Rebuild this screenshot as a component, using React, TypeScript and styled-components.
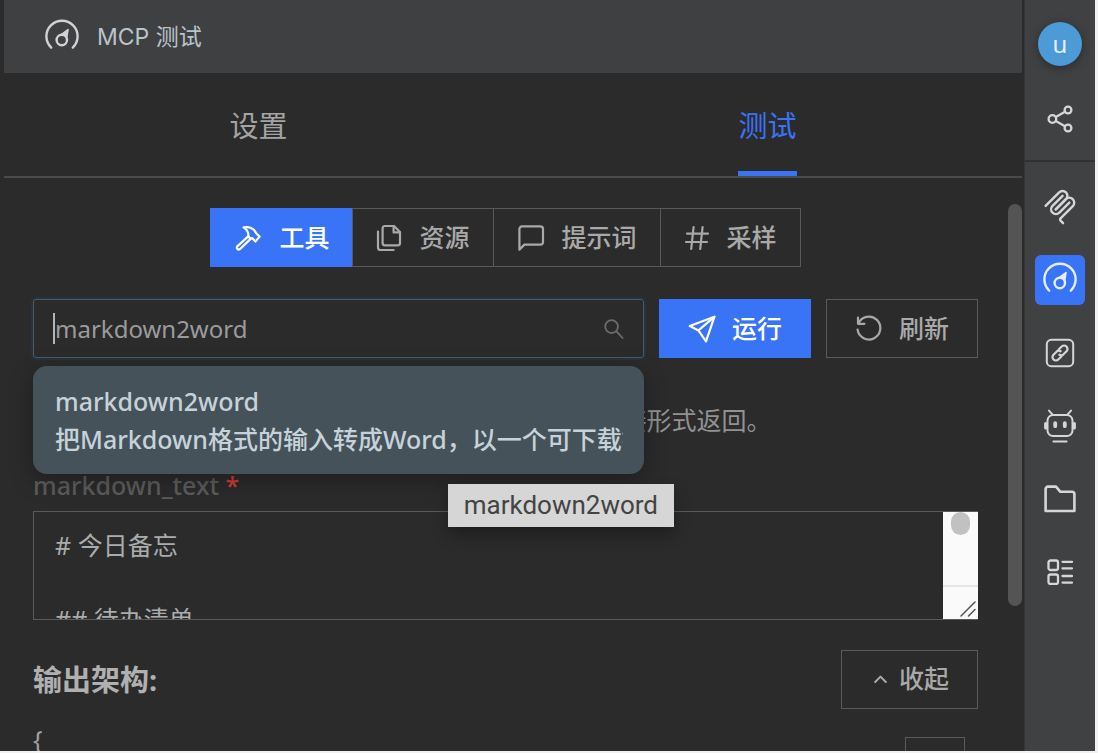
import React from "react";
import styled, { createGlobalStyle, css } from "styled-components";

const GlobalStyle = createGlobalStyle`
  *, *::before, *::after { box-sizing: border-box; }
  body {
    margin: 0;
    background: #f1f1f1;
    color: #a9abad;
    font-family: "Noto Sans", "Noto Sans CJK SC", sans-serif;
    font-size: 25px;
    line-height: 37px;
  }
  button, input, textarea { font: inherit; color: inherit; margin: 0; border-radius: 0; }
  button { cursor: pointer; }
`;

const blue = "#3874f5";
const line = "#5a5a5a";

const Shell = styled.div`
  display: flex;
  height: 100vh;
  padding: 0 3px 2px 0;
  overflow: hidden;
`;

const Panel = styled.main`
  flex: 1;
  min-width: 0;
  display: flex;
  flex-direction: column;
  padding: 0 2px 0 4px;
  background: #2b2b2b;
`;

const Header = styled.header`
  flex: none;
  display: flex;
  align-items: center;
  gap: 16px;
  height: 73px;
  padding: 0 39px;
  background: #3f4042;
  color: #d0d3d6;
`;

const Title = styled.h1`
  margin: 0;
  padding-top: 2px;
  font-family: Inter, "Noto Sans CJK SC", sans-serif;
  font-size: 23px;
  font-weight: 400;
  color: #b9c3cc;
`;

const Tabs = styled.nav`
  flex: none;
  display: flex;
  height: 105px;
  border-bottom: 2px solid #4a4a4a;
`;

const TabCell = styled.div`
  flex: 1;
  display: flex;
  justify-content: center;
`;

const Tab = styled.button<{ $active?: boolean }>`
  padding: 6px 0 0;
  border: 0;
  border-bottom: 5px solid ${(p) => (p.$active ? blue : "transparent")};
  background: none;
  color: ${(p) => (p.$active ? blue : "#a4a4a4")};
  font-size: 29px;
`;

const Body = styled.div`
  flex: 1;
  min-height: 0;
  display: flex;
  overflow: hidden;
`;

const Content = styled.div`
  flex: 1;
  min-width: 0;
  padding: 30px 30px 0 29px;
`;

const ScrollTrack = styled.div`
  flex: none;
  width: 14px;
  padding-top: 26px;
`;

const ScrollThumb = styled.div`
  height: 402px;
  border-radius: 7px;
  background: #545454;
`;

const Segments = styled.div`
  display: flex;
  justify-content: center;
  margin-bottom: 32px;
`;

const boxed = css`
  display: flex;
  align-items: center;
  justify-content: center;
  height: 59px;
  border: 1px solid ${line};
  background: transparent;
  color: #a9a9a9;
  font-weight: 500;
  white-space: nowrap;
`;

const Segment = styled.button<{ $active?: boolean }>`
  ${boxed}
  gap: 17px;
  padding: 0 23px;
  & + & { margin-left: -1px; }
  ${(p) => p.$active && css`
    background: ${blue};
    border-color: ${blue};
    color: #fff;
  `}
`;

const RunRow = styled.form`
  display: flex;
  gap: 15px;
`;

const SearchBox = styled.div`
  position: relative;
  flex: 1;
  min-width: 0;
  display: flex;
  align-items: center;
  height: 59px;
  padding: 0 19px;
  border: 1px solid #4d5a63;
  border-radius: 3px;
  box-shadow: 0 0 0 2px #26333d;
  color: #9b9b9b;
`;

const Caret = styled.span`
  width: 2px;
  height: 31px;
  background: #b4b4b4;
`;

const SearchInput = styled.input`
  flex: 1;
  min-width: 0;
  padding: 0;
  border: 0;
  outline: 0;
  background: none;
  font-size: 24px;
`;

const SearchMark = styled.span`
  display: flex;
  color: #6c6c6c;
`;

const Action = styled.button<{ $primary?: boolean }>`
  ${boxed}
  width: 152px;
  gap: 16px;
  padding: 0;
  ${(p) => p.$primary && css`
    background: ${blue};
    border-color: ${blue};
    color: #fff;
  `}
`;

const Options = styled.ul`
  position: absolute;
  z-index: 1;
  top: 66px;
  left: -1px;
  right: -1px;
  margin: 0;
  padding: 16px 21px 16px 22px;
  border-radius: 14px;
  background: #46525a;
  box-shadow: 0 6px 24px rgba(0, 0, 0, 0.3);
  color: #c6d2da;
  font-weight: 500;
  list-style: none;
`;

const OptionLine = styled.div`
  height: 38px;
  line-height: 38px;
  overflow: hidden;
  white-space: nowrap;
`;

const Tooltip = styled.div`
  position: absolute;
  z-index: 2;
  top: 184px;
  right: -31px;
  height: 43px;
  padding: 0 16px;
  background: #d6d6d6;
  box-shadow: 0 8px 16px rgba(0, 0, 0, 0.3);
  color: #444;
  font-family: Roboto, sans-serif;
  font-size: 26px;
  line-height: 43px;
`;

const Description = styled.p`
  margin: 44px 0 28px;
  color: #929292;
`;

const FieldLabel = styled.label`
  display: block;
  margin-bottom: 7px;
  font-weight: 500;
  color: #5c5c5c;
`;

const Required = styled.span`
  color: #d63a3a;
`;

const TextFrame = styled.div`
  display: flex;
  height: 109px;
  border: 1px solid ${line};
  border-right: 0;
`;

const TextArea = styled.textarea`
  flex: 1;
  min-width: 0;
  padding: 15px 21px 0;
  border: 0;
  outline: 0;
  resize: none;
  overflow: hidden;
  background: none;
`;

const TextScroll = styled.div`
  display: flex;
  flex-direction: column;
  justify-content: space-between;
  align-items: center;
  width: 35px;
  background: #fafafa;
`;

const TextThumb = styled.div`
  width: 19px;
  height: 23px;
  border-radius: 10px;
  background: #c1c1c1;
`;

const Grip = styled.div`
  display: flex;
  justify-content: flex-end;
  align-items: flex-end;
  width: 100%;
  height: 34px;
  padding: 0 2px 2px 0;
  border-top: 2px solid #e6e6e6;
`;

const OutputRow = styled.div`
  display: flex;
  align-items: center;
  justify-content: space-between;
  margin: 30px 0 12px;
`;

const OutputTitle = styled.h2`
  margin: 0;
  font-size: 29px;
  font-weight: 700;
  color: #b0b0b0;
`;

const Collapse = styled.button`
  ${boxed}
  width: 137px;
  gap: 12px;
  padding: 0 0 2px 4px;
`;

const CodeRow = styled.div`
  display: flex;
  align-items: flex-start;
  justify-content: space-between;
`;

const Code = styled.code`
  font-family: inherit;
  color: #a0a0a0;
`;

const CopyButton = styled.button`
  ${boxed}
  flex: none;
  width: 60px;
  margin: 16px 13px 0 0;
`;

const Sidebar = styled.aside`
  flex: none;
  display: flex;
  flex-direction: column;
  align-items: center;
  width: 71px;
  border-left: 1px solid #353637;
  background: #3f4142;
`;

const Account = styled.div`
  display: flex;
  flex-direction: column;
  align-items: center;
  gap: 28px;
  width: 100%;
  height: 162px;
  padding-top: 22px;
  border-bottom: 2px solid #303132;
`;

const Avatar = styled.button`
  width: 44px;
  height: 44px;
  padding: 0;
  border: 0;
  border-radius: 50%;
  background: #4c9bd6;
  box-shadow: 0 2px 10px rgba(0, 0, 0, 0.35);
  color: #e4f1fb;
  font-size: 24px;
  line-height: 42px;
`;

const Tools = styled.nav`
  display: flex;
  flex-direction: column;
  gap: 23px;
  padding-top: 20px;
`;

const ToolButton = styled.button<{ $active?: boolean }>`
  display: flex;
  align-items: center;
  justify-content: center;
  width: 50px;
  height: 50px;
  padding: 0;
  border: 0;
  border-radius: 6px;
  background: ${(p) => (p.$active ? blue : "transparent")};
  color: ${(p) => (p.$active ? "#e6eefc" : "#d4d6d8")};
`;

type IconProps = { w: number; h?: number; box?: string; sw?: number; children: React.ReactNode };

function Icon({ w, h = w, box, sw = 2, children }: IconProps) {
  return (
    <svg width={w} height={h} viewBox={box ?? `0 0 ${w} ${h}`} fill="none" stroke="currentColor"
      strokeWidth={sw} strokeLinecap="round" strokeLinejoin="round" aria-hidden="true">
      {children}
    </svg>
  );
}

const GaugeIcon = () => (
  <Icon w={38} sw={2.4}>
    <path d="M8.2 29.6A15.6 15.6 0 1 1 29.8 29.600" />
    <circle cx="18.8" cy="22" r="5.200" />
    <path d="M18.600 16.400L25 11.600L23.800 19.200L21.600 17.200Z" fill="currentColor" strokeWidth="1.600" />
  </Icon>
);

const HammerIcon = () => (
  <Icon w={28} sw={2.200}>
    <path d="M9.6 3.4C14.6 2.2 20 4 22.2 9.2L25.6 12.6L21.4 17.6L18.4 14.2C16.8 15 15.2 13.8 14.4 12.2C14.6 8.4 13 5.4 9.6 3.4Z" />
    <path d="M14.2 12.4L3 22.6C2 24 4 26.4 5.8 25.2L17.2 14.4" />
  </Icon>
);

const FilesIcon = () => (
  <Icon w={26} h={28} sw={2.200}>
    <path d="M9 2H18L24 8V19A2.4 2.4 0 0 1 21.6 21.4H9A2.4 2.4 0 0 1 6.600 19V4.400A2.400 2.400 0 0 1 9 2Z" />
    <path d="M17.600 2V8.400H24M2 7.600V23.400A2.600 2.600 0 0 0 4.600 26H17.600" />
  </Icon>
);

const MessageIcon = () => (
  <Icon w={28} sw={2.200}>
    <path d="M2.400 25.600V5A2.600 2.600 0 0 1 5 2.400H23.400A2.600 2.600 0 0 1 26 5V18A2.600 2.600 0 0 1 23.400 20.600H7.400Z" />
  </Icon>
);

const HashIcon = () => (
  <Icon w={26} sw={2.200}>
    <path d="M9.600 2L7.200 24M18.600 2L16.200 24M3 8.600H24M2 17H23" />
  </Icon>
);

const SearchIcon = () => (
  <Icon w={20} sw={1.800}>
    <circle cx="7.600" cy="7.600" r="6.400" />
    <path d="M12.400 12.400L18.600 19" />
  </Icon>
);

const SendIcon = () => (
  <Icon w={28} sw={2.200}>
    <path d="M26.400 1.800L1.800 11L10.400 15.400L18 26.400Z" />
    <path d="M26.400 1.800L10.400 15.400" />
  </Icon>
);

const RefreshIcon = () => (
  <Icon w={28} sw={2.200}>
    <path d="M3 2.600V8.800H9.400M3.400 8.600A11.400 11.400 0 1 1 2.600 14.600" />
  </Icon>
);

const ChevronIcon = () => (
  <Icon w={13} h={8} sw={2}>
    <path d="M1.200 7L6.500 1.600L11.800 7" />
  </Icon>
);

const ShareIcon = () => (
  <Icon w={26} h={28} sw={2.300}>
    <circle cx="5.400" cy="14" r="3.800" />
    <circle cx="21" cy="5" r="3.400" />
    <circle cx="21" cy="23" r="3.400" />
    <path d="M8.800 12L18 6.800M8.800 16L18 21.200" />
  </Icon>
);

const McpIcon = () => (
  <Icon w={36} box="0 0 180 180" sw={12}>
    <path d="M18 84.8528L85.8822 16.9706C95.2548 7.59798 110.451 7.59798 119.823 16.9706C129.196 26.3431 129.196 41.5391 119.823 50.9117L68.5581 102.177" />
    <path d="M69.2652 101.47L119.823 50.9117C129.196 41.5391 144.392 41.5391 153.765 50.9117L154.118 51.2652C163.491 60.6378 163.491 75.8338 154.118 85.2063L92.7248 146.6C89.6006 149.724 89.6006 154.789 92.7248 157.913L105.331 170.52" />
    <path d="M102.853 33.9411L52.6482 84.1457C43.2756 93.5183 43.2756 108.714 52.6482 118.087C62.0208 127.459 77.2167 127.459 86.5893 118.087L136.794 67.8822" />
  </Icon>
);

const LinkIcon = () => (
  <Icon w={30}>
    <rect x="1.800" y="1.800" width="26.400" height="26.400" rx="4.500" />
    <g transform="rotate(-45 15 15)" strokeWidth="2.200">
      <path d="M13.500 18.400H9.200A3.400 3.400 0 0 1 9.200 11.600H13.500A3.400 3.400 0 0 1 16.700 14.200" />
      <path d="M16.500 11.600H20.800A3.400 3.400 0 0 1 20.800 18.400H16.500A3.400 3.400 0 0 1 13.300 15.800" />
    </g>
  </Icon>
);

const RobotIcon = () => (
  <Icon w={34}>
    <rect x="4.500" y="6" width="25" height="21" rx="5.500" />
    <path d="M6 1.600L9.400 5.400M28 1.600L24.600 5.400M10.400 32.600H23.600" />
    <path d="M2.600 14.600V19M31.400 14.600V19" strokeWidth="3" />
    <path d="M12.200 14.200V17.200M21.800 14.200V17.200" strokeWidth="3.800" />
  </Icon>
);

const FolderIcon = () => (
  <Icon w={32} h={28} sw={2.600}>
    <path d="M1.600 26V4A2.400 2.400 0 0 1 4 1.600H12L16.400 6.800H28A2.400 2.400 0 0 1 30.400 9.200V26Z" />
  </Icon>
);

const ListIcon = () => (
  <Icon w={26} sw={2.300}>
    <rect x="1.500" y="1.500" width="9.500" height="9.500" rx="2" />
    <rect x="1.500" y="15.500" width="9.500" height="9.500" rx="2" />
    <path d="M15.500 2.800H25M15.500 9.400H25M15.500 17H25M15.500 23.600H25" />
  </Icon>
);

const GripIcon = () => (
  <Icon w={16} sw={1.500}>
    <path d="M1 15L15 1M8.500 15L15 8.500" stroke="#555" />
  </Icon>
);

const segments = [
  { label: "工具", icon: <HammerIcon />, active: true },
  { label: "资源", icon: <FilesIcon /> },
  { label: "提示词", icon: <MessageIcon /> },
  { label: "采样", icon: <HashIcon /> },
];

const tools = [
  { label: "MCP", icon: <McpIcon /> },
  { label: "MCP 测试", icon: <GaugeIcon />, active: true },
  { label: "链接", icon: <LinkIcon /> },
  { label: "机器人", icon: <RobotIcon /> },
  { label: "文件夹", icon: <FolderIcon /> },
  { label: "列表", icon: <ListIcon /> },
];

export default function App() {
  return (
    <Shell>
      <GlobalStyle />
      <Panel>
        <Header>
          <GaugeIcon />
          <Title>MCP 测试</Title>
        </Header>
        <Tabs>
          <TabCell><Tab type="button">设置</Tab></TabCell>
          <TabCell><Tab type="button" $active>测试</Tab></TabCell>
        </Tabs>
        <Body>
          <Content>
            <Segments>
              {segments.map((s) => (
                <Segment key={s.label} type="button" $active={s.active}>
                  {s.icon}
                  {s.label}
                </Segment>
              ))}
            </Segments>
            <RunRow onSubmit={(e) => e.preventDefault()}>
              <SearchBox>
                <Caret />
                <SearchInput aria-label="工具" defaultValue="markdown2word" />
                <SearchMark><SearchIcon /></SearchMark>
                <Options>
                  <li>
                    <OptionLine>markdown2word</OptionLine>
                    <OptionLine>把Markdown格式的输入转成Word，以一个可下载链接形式返回。</OptionLine>
                  </li>
                </Options>
                <Tooltip role="tooltip">markdown2word</Tooltip>
              </SearchBox>
              <Action type="submit" $primary><SendIcon />运行</Action>
              <Action type="button"><RefreshIcon />刷新</Action>
            </RunRow>
            <Description>把Markdown格式的输入转成Word，以一个可下载链接形式返回。</Description>
            <FieldLabel htmlFor="markdown-text">
              markdown_text <Required>*</Required>
            </FieldLabel>
            <TextFrame>
              <TextArea id="markdown-text" defaultValue={"# 今日备忘\n\n## 待办清单"} />
              <TextScroll>
                <TextThumb />
                <Grip><GripIcon /></Grip>
              </TextScroll>
            </TextFrame>
            <OutputRow>
              <OutputTitle>输出架构:</OutputTitle>
              <Collapse type="button"><ChevronIcon />收起</Collapse>
            </OutputRow>
            <CodeRow>
              <Code>{"{"}</Code>
              <CopyButton type="button" aria-label="复制" />
            </CodeRow>
          </Content>
          <ScrollTrack><ScrollThumb /></ScrollTrack>
        </Body>
      </Panel>
      <Sidebar>
        <Account>
          <Avatar type="button">u</Avatar>
          <ToolButton as="a" href="#share" aria-label="分享"><ShareIcon /></ToolButton>
        </Account>
        <Tools>
          {tools.map((t) => (
            <ToolButton key={t.label} type="button" aria-label={t.label} $active={t.active}>
              {t.icon}
            </ToolButton>
          ))}
        </Tools>
      </Sidebar>
    </Shell>
  );
}
